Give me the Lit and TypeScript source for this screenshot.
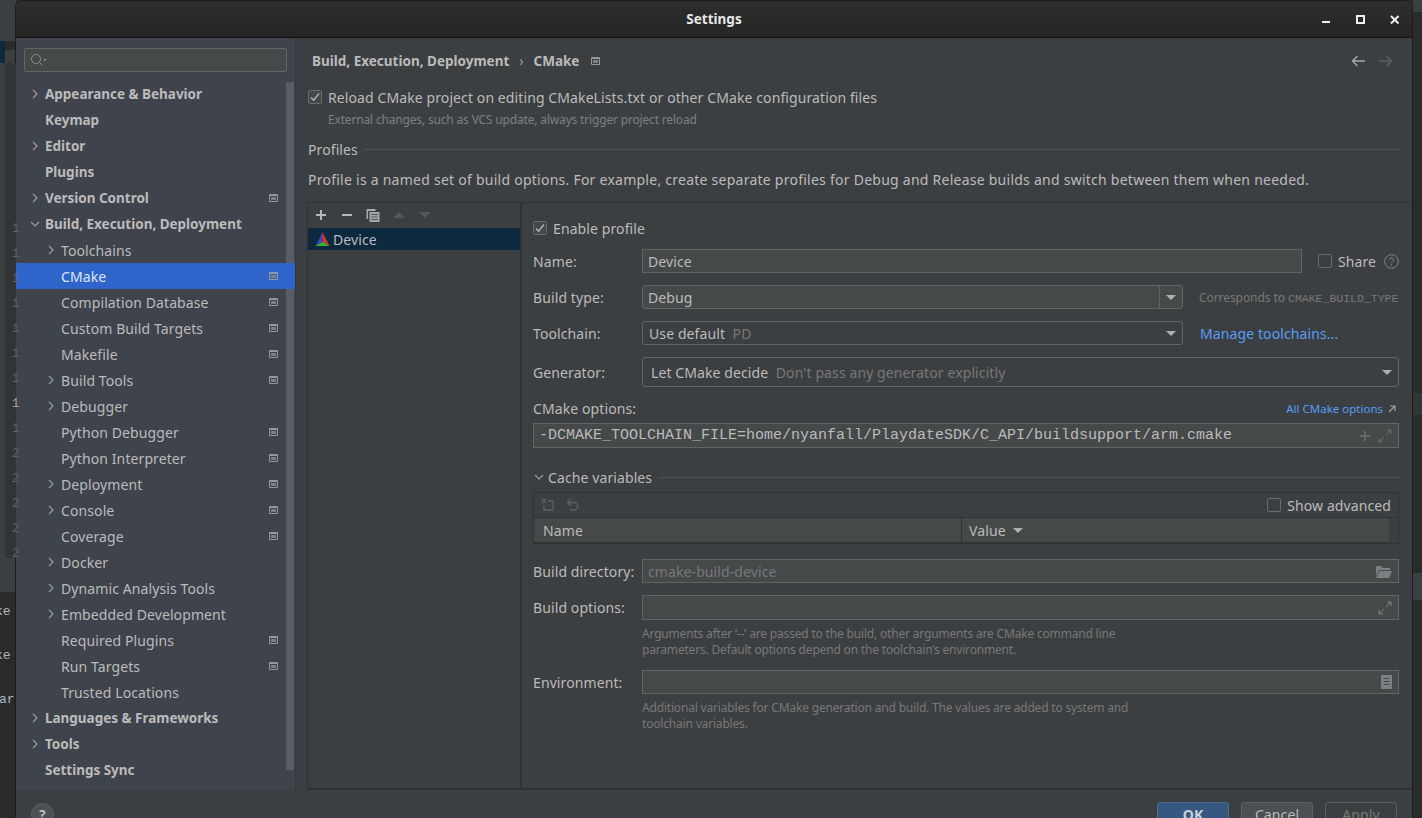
import { LitElement, css, html, svg } from 'lit';
import { customElement } from 'lit/decorators.js';

type TreeRow = { label: string; level: 0 | 1; arrow?: 'right' | 'down'; pin?: boolean; selected?: boolean };

const TREE: TreeRow[] = [
  { label: 'Appearance & Behavior', level: 0, arrow: 'right' },
  { label: 'Keymap', level: 0 },
  { label: 'Editor', level: 0, arrow: 'right' },
  { label: 'Plugins', level: 0 },
  { label: 'Version Control', level: 0, arrow: 'right', pin: true },
  { label: 'Build, Execution, Deployment', level: 0, arrow: 'down' },
  { label: 'Toolchains', level: 1, arrow: 'right' },
  { label: 'CMake', level: 1, pin: true, selected: true },
  { label: 'Compilation Database', level: 1, pin: true },
  { label: 'Custom Build Targets', level: 1, pin: true },
  { label: 'Makefile', level: 1, pin: true },
  { label: 'Build Tools', level: 1, arrow: 'right', pin: true },
  { label: 'Debugger', level: 1, arrow: 'right' },
  { label: 'Python Debugger', level: 1, pin: true },
  { label: 'Python Interpreter', level: 1, pin: true },
  { label: 'Deployment', level: 1, arrow: 'right', pin: true },
  { label: 'Console', level: 1, arrow: 'right', pin: true },
  { label: 'Coverage', level: 1, pin: true },
  { label: 'Docker', level: 1, arrow: 'right' },
  { label: 'Dynamic Analysis Tools', level: 1, arrow: 'right' },
  { label: 'Embedded Development', level: 1, arrow: 'right' },
  { label: 'Required Plugins', level: 1, pin: true },
  { label: 'Run Targets', level: 1, pin: true },
  { label: 'Trusted Locations', level: 1 },
  { label: 'Languages & Frameworks', level: 0, arrow: 'right' },
  { label: 'Tools', level: 0, arrow: 'right' },
  { label: 'Settings Sync', level: 0 },
  { label: 'Advanced Settings', level: 0 },
];

// line numbers of the editor peeking out left of the dialog
const GUTTER = Array.from(new Array(14)).map(($, i) => ({ top: 222 + i * 25, nb: i < 9 ? '1' : '2', bright: i === 7 }));

const chevron = (dir: 'right' | 'down') =>
  svg`<svg class="chev" width="10" height="10" viewBox="0 0 10 10"><path d="${
    dir === 'right' ? 'M3 1l4 4-4 4' : 'M1 3l4 4 4-4'
  }" fill="none" stroke="#9a9da0" stroke-width="1.2"/></svg>`;

const pin = () =>
  svg`<svg class="pin" width="10" height="9" viewBox="0 0 10 9"><path d="M.5.5h8v7h-8z" fill="none" stroke="#94989d"/><path d="M1 1h7v1H1z" fill="#94989d"/><path d="M2 3h5v3H2z" fill="#7d8186"/></svg>`;

const check = () =>
  svg`<svg width="10" height="10" viewBox="0 0 10 10"><path d="M1 5.5l2.6 2.8L9 1.5" fill="none" stroke="#a9abad" stroke-width="1.6"/></svg>`;

const caret = () => html`<span class="caret"></span>`;

@customElement('app-root')
export class AppRoot extends LitElement {
  static styles = css`
    :host {
      display: block;
      width: 1422px;
      height: 818px;
      overflow: hidden;
      position: relative;
      background: #2b2b2b;
      font-family: 'Noto Sans', 'Open Sans', sans-serif;
      font-size: 14px;
      letter-spacing: 0.1px;
      color: #bbbbbb;
    }
    .behind {
      position: absolute;
      inset: 0;
      font-family: 'Liberation Mono', monospace;
      font-size: 13px;
      letter-spacing: 0;
      color: #a9b7c6;
    }
    .behind > div { position: absolute; }
    .behind .top { left: 0; top: 0; width: 16px; height: 41px; background: #3c3f41; }
    .behind .sel { left: 0; top: 41px; width: 5px; height: 22px; background: #0d293e; }
    .behind .tree { left: 0; top: 41px; width: 16px; height: 517px; background: #3c3f41; z-index: 0; }
    .behind .sel { z-index: 1; }
    .behind .side { left: 5px; top: 63px; width: 11px; height: 495px; background: #313335; z-index: 1; }
    .behind .bar { left: 0; top: 558px; width: 16px; height: 34px; background: #3c3f41; }
    .behind .frag { position: absolute; white-space: pre; }
    .behind .nb { position: absolute; left: 12px; z-index: 2; font-size: 12px; color: #606366; }
    .behind .nb.bright { color: #a4a3a3; }
    .behind .right { right: 0; top: 0; width: 9px; height: 818px; background: #2b2b2b; }
    .behind .rtop { right: 0; top: 0; width: 9px; height: 12px; background: #3c3f41; z-index: 1; }
    .behind .r1 { right: 0; top: 393px; width: 9px; height: 22px; background: #333537; z-index: 1; }
    .behind .r2 { right: 0; top: 573px; width: 9px; height: 27px; background: #3c3f41; z-index: 1; }
    .window {
      position: absolute;
      left: 15px;
      top: 0;
      width: 1398px;
      height: 830px;
      border: 1px solid #1c1c1c;
      border-radius: 7px 7px 0 0;
      display: flex;
      flex-direction: column;
      background: #3c3f41;
      box-sizing: border-box;
      overflow: hidden;
    }
    .title {
      height: 37px;
      flex: none;
      box-sizing: border-box;
      border-bottom: 1px solid #111;
      background: linear-gradient(#2e2e2e, #252525);
      display: flex;
      align-items: center;
      justify-content: center;
      position: relative;
      font-weight: 700;
      font-size: 13.5px;
      letter-spacing: 0;
      color: #e6e6e6;
    }
    .winctl svg { display: block; position: absolute; }
    .body { flex: none; height: 752px; display: flex; }
    .sidebar {
      width: 279px;
      flex: none;
      background: #3f434b;
      position: relative;
      overflow: hidden;
      box-sizing: border-box;
      padding-top: 10px;
    }
    .search {
      margin-left: 8px;
      width: 263px;
      height: 24px;
      box-sizing: border-box;
      border: 1px solid #646464;
      border-radius: 2px;
      background: #45494a;
      display: flex;
      align-items: center;
      padding-left: 5px;
    }
    .tree { margin-top: 9px; position: relative; z-index: 1; }
    .row {
      height: 26px;
      display: flex;
      align-items: center;
      position: relative;
      white-space: nowrap;
    }
    .row.l0 { padding-left: 29px; font-weight: 700; font-size: 13.5px; letter-spacing: -0.02px; }
    .row.l1 { padding-left: 45px; }
    .row .chev { position: absolute; top: 8px; }
    .row.l0 .chev { left: 14px; }
    .row.l1 .chev { left: 30px; }
    .row .pin { position: absolute; left: 253px; top: 9px; }
    .row.sel { background: #2f65ca; color: #dfe6f2; }
    .scroll {
      position: absolute;
      left: 270px;
      top: 44px;
      width: 8px;
      height: 688px;
      background: #595c64;
    }
    .main {
      flex: 1;
      min-width: 0;
      box-sizing: border-box;
      padding: 0 0 0 12px;
      display: flex;
      flex-direction: column;
      border-left: 1px solid #353739;
    }
    .crumbs {
      height: 46px;
      flex: none;
      display: flex;
      align-items: center;
      padding: 0 0 0 4px;
      font-weight: 700;
      font-size: 13.5px;
      letter-spacing: 0;
      position: relative;
    }
    .crumbs .sep { margin: 0 10px; font-weight: 400; color: #9a9da0; }
    .crumbs .pin { margin-left: 12px; }
    .nav { margin-left: auto; margin-right: 19px; display: flex; gap: 12px; }
    .cb {
      width: 14px;
      height: 14px;
      box-sizing: border-box;
      border: 1px solid #6b6b6b;
      border-radius: 2px;
      background: #43494a;
      display: inline-flex;
      align-items: center;
      justify-content: center;
      flex: none;
    }
    .cb.off { background: none; }
    .line { display: flex; align-items: center; gap: 6px; }
    .reload { height: 26px; }
    .sub { font-size: 12px; letter-spacing: -0.17px; color: #7d8083; padding-left: 20px; height: 18px; line-height: 18px; margin-top: 1px; }
    .group { display: flex; align-items: center; margin-top: 9px; height: 22px; }
    .group::after { content: ''; flex: 1; height: 1px; background: #515151; margin-left: 6px; }
    .profiles { margin-right: 11px; }
    .desc { height: 22px; margin-top: 8px; display: flex; align-items: center; letter-spacing: 0.25px; white-space: nowrap; }
    .panel {
      flex: 1;
      min-height: 0;
      margin-top: 12px;
      margin-left: -1px;
      border-top: 1px solid #323232;
      border-left: 1px solid #323232;
      border-bottom: 2px solid #323232;
      display: flex;
    }
    .left { width: 212px; flex: none; border-right: 2px solid #323232; }
    .tools { height: 24px; display: flex; align-items: center; gap: 12px; padding-left: 6px; }
    .tools svg { display: block; }
    .device { height: 22px; background: #0d293e; display: flex; align-items: center; gap: 3px; padding-left: 7px; margin-top: 1px; }
    .form { flex: 1; min-width: 0; padding: 0 13px 0 11px; box-sizing: border-box; }
    .enable { height: 24px; margin-top: 13px; gap: 6px; }
    .frow { display: flex; align-items: center; margin-top: 12px; }
    .frow.first { margin-top: 9px; }
    .frow.dir { margin-top: 15px; }
    .frow > label { width: 109px; flex: none; white-space: nowrap; }
    .field {
      box-sizing: border-box;
      height: 24px;
      border: 1px solid #646464;
      background: #45494a;
      display: flex;
      align-items: center;
      padding-left: 5px;
      white-space: nowrap;
      position: relative;
    }
    .field.name { width: 660px; }
    .field.h25 { height: 25px; }
    .grow { flex: 1; min-width: 0; }
    .combo { background: #3c3f41; border-radius: 3px; padding-left: 6px; width: 541px; }
    .combo.filled { background: #45494a; padding-left: 5px; }
    .combo.generator { width: auto; height: 30px; padding-left: 8px; }
    .share { margin-left: 6px; }
    .dim { color: #787878; }
    .hint { font-size: 12px; letter-spacing: -0.07px; color: #787878; margin-left: 16px; white-space: nowrap; }
    .hint .m { font-family: 'Liberation Mono', monospace; font-size: 11.5px; letter-spacing: 0; }
    .link { color: #589df6; }
    .manage { margin-left: 17px; }
    .caret {
      width: 0;
      height: 0;
      border-left: 5px solid transparent;
      border-right: 5px solid transparent;
      border-top: 5px solid #aeb1b3;
      position: absolute;
      right: 6px;
      top: 50%;
      margin-top: -2px;
    }
    .seg {
      position: absolute;
      right: 22px;
      top: 0;
      bottom: 0;
      width: 1px;
      background: #646464;
    }
    .optlabel { display: flex; align-items: center; justify-content: space-between; margin-top: 9px; height: 24px; }
    .optlabel .link { font-size: 11.5px; letter-spacing: 0; }
    .ext { margin: 0 3px 0 2px; }
    .mono { font-family: 'Liberation Mono', monospace; font-size: 15px; letter-spacing: 0; color: #bbbbbb; height: 25px; margin-top: 3px; }
    .icons { position: absolute; right: 6px; top: 0; bottom: 0; display: flex; align-items: center; gap: 7px; }
    .cache { display: flex; align-items: center; height: 22px; margin-top: 18px; }
    .cache::after { content: ''; flex: 1; height: 1px; background: #515151; margin-left: 6px; }
    .cache svg { margin: 0 4px 0 1px; }
    .table { border: 1px solid #323232; margin-top: 4px; height: 52px; box-sizing: border-box; }
    .ttools { height: 24px; display: flex; align-items: center; padding-left: 7px; gap: 11px; border-bottom: 1px solid #323232; }
    .advanced { margin-left: auto; margin-right: 7px; gap: 6px; }
    .thead { height: 25px; display: flex; align-items: center; background: #45494a; margin-right: 9px; box-sizing: border-box; border-bottom: 1px solid #323232; }
    .thead .c1 { width: 428px; box-sizing: border-box; padding-left: 9px; border-right: 1px solid #323232; height: 100%; display: flex; align-items: center; }
    .thead .c2 { padding-left: 7px; display: flex; align-items: center; gap: 7px; }
    .sort { width: 0; height: 0; border-left: 5px solid transparent; border-right: 5px solid transparent; border-top: 5px solid #aeb1b3; }
    .help { font-size: 12px; letter-spacing: -0.18px; line-height: 16px; color: #787878; margin: 6px 0 0 109px; }
    .foot {
      flex: none;
      height: 40px;
      display: flex;
      align-items: flex-start;
      padding-top: 12px;
      box-sizing: border-box;
      position: relative;
    }
    .qm {
      position: absolute;
      left: 15px;
      top: 13px;
      width: 23px;
      height: 23px;
      box-sizing: border-box;
      border-radius: 50%;
      border: 1px solid #5e6060;
      background: #4c5052;
      text-align: center;
      font-weight: 700;
      line-height: 21px;
    }
    .btns { margin-left: auto; margin-right: 15px; display: flex; gap: 12px; }
    .btn {
      width: 72px;
      height: 26px;
      box-sizing: border-box;
      border: 1px solid #5e6060;
      border-radius: 3px;
      background: #4c5052;
      text-align: center;
      line-height: 24px;
    }
    .btn.ok { background: #365880; border-color: #4c708c; font-weight: 700; color: #c9d2db; }
    .btn.off { background: transparent; color: #777777; }
  `;

  render() {
    return html`
      <div class="behind">
        <div class="top"></div>
        <div class="tree"></div>
        <div class="sel"></div>
        <div class="side"></div>
        <div class="bar"></div>
        ${GUTTER.map((g) => html`<span class="nb ${g.bright ? 'bright' : ''}" style="top:${g.top}px">${g.nb}</span>`)}
        <span class="frag" style="top:604px;left:-5px">ke</span>
        <span class="frag" style="top:648px;left:-5px">ke</span>
        <span class="frag" style="top:692px;left:-1px">arg</span>
        <div class="right"></div>
        <div class="rtop"></div>
        <div class="r1"></div>
        <div class="r2"></div>
      </div>
      <div class="window">
        <div class="title">
          Settings
          <div class="winctl">
            <svg style="right:81px;top:12px" width="10" height="10" viewBox="0 0 10 10"><path d="M1 8h8v2H1z" fill="#eee"/></svg>
            <svg style="right:46px;top:14px" width="10" height="10" viewBox="0 0 10 10"><path d="M1 1h7v7H1z" fill="none" stroke="#eee" stroke-width="2"/></svg>
            <svg style="right:12px;top:14px" width="10" height="10" viewBox="0 0 10 10"><path d="M1 1l7.5 7.5M8.5 1L1 8.5" fill="none" stroke="#eee" stroke-width="2"/></svg>
          </div>
        </div>
        <div class="body">
          <div class="sidebar">
            <div class="search">
              <svg width="18" height="14" viewBox="0 0 18 14"><circle cx="6" cy="6" r="4.5" fill="none" stroke="#8a8d90"/><path d="M9.5 9.5l3 3" stroke="#8a8d90"/><path d="M13 6h4l-2 2z" fill="#8a8d90"/></svg>
            </div>
            <div class="tree">
              ${TREE.map(
                (r) => html`<div class="row l${r.level} ${r.selected ? 'sel' : ''}">
                  ${r.arrow ? chevron(r.arrow) : ''}${r.label}${r.pin ? pin() : ''}
                </div>`,
              )}
            </div>
            <div class="scroll"></div>
          </div>
          <div class="main">
            <div class="crumbs">
              Build, Execution, Deployment<span class="sep">›</span>CMake${pin()}
              <div class="nav">
                <svg width="15" height="12" viewBox="0 0 15 12"><path d="M14 6H2M6.5 1L1.5 6l5 5" fill="none" stroke="#a6a8aa" stroke-width="1.5"/></svg>
                <svg width="15" height="12" viewBox="0 0 15 12"><path d="M1 6h12M8.5 1l5 5-5 5" fill="none" stroke="#5c5f61" stroke-width="1.5"/></svg>
              </div>
            </div>
            <div class="line reload"><span class="cb">${check()}</span>Reload CMake project on editing CMakeLists.txt or other CMake configuration files</div>
            <div class="sub">External changes, such as VCS update, always trigger project reload</div>
            <div class="group profiles">Profiles</div>
            <div class="desc">Profile is a named set of build options. For example, create separate profiles for Debug and Release builds and switch between them when needed.</div>
            <div class="panel">
              <div class="left">
                <div class="tools">
                  <svg width="14" height="14" viewBox="0 0 14 14"><path d="M7 2v10M2 7h10" stroke="#b4b6b8" stroke-width="2"/></svg>
                  <svg width="14" height="14" viewBox="0 0 14 14"><path d="M2 7h10" stroke="#b4b6b8" stroke-width="2"/></svg>
                  <svg width="14" height="14" viewBox="0 0 14 14"><path d="M.5 1h9v2H2v8H.5z" fill="#a6a8aa"/><path d="M3.5 4h10v10h-10z" fill="#a6a8aa"/><path d="M5 6.5h7M5 9h7M5 11.5h7" stroke="#3c3f41" stroke-width=".8"/></svg>
                  <svg width="14" height="14" viewBox="0 0 14 14"><path d="M1 10l6-6 6 6z" fill="#55585a"/></svg>
                  <svg width="14" height="14" viewBox="0 0 14 14"><path d="M1 4l6 6 6-6z" fill="#55585a"/></svg>
                </div>
                <div class="device">
                  <svg width="15" height="15" viewBox="0 0 15 15"><path d="M7.5 0L.5 14l7-4z" fill="#3b46c0"/><path d="M7.5 0l7 14-7-4z" fill="#d7352c"/><path d="M.5 14l7-4 7 4z" fill="#35b52f"/></svg>
                  Device
                </div>
              </div>
              <div class="form">
                <div class="line enable"><span class="cb">${check()}</span>Enable profile</div>
                <div class="frow first">
                  <label>Name:</label>
                  <div class="field name">Device</div>
                  <span class="cb off" style="margin-left:16px"></span>
                  <span class="share">Share</span>
                  <svg style="margin-left:8px" width="15" height="15" viewBox="0 0 15 15"><circle cx="7.5" cy="7.5" r="6.8" fill="none" stroke="#808386"/><path d="M5.500 6a2 2 0 1 1 3 1.700c-.7.4-1 .8-1 1.500M7.500 10.500v1.300" fill="none" stroke="#808386"/></svg>
                </div>
                <div class="frow">
                  <label>Build type:</label>
                  <div class="field combo filled">Debug<span class="seg"></span>${caret()}</div>
                  <span class="hint">Corresponds to <span class="m">CMAKE_BUILD_TYPE</span></span>
                </div>
                <div class="frow">
                  <label>Toolchain:</label>
                  <div class="field combo">Use default&nbsp;&nbsp;<span class="dim">PD</span>${caret()}</div>
                  <span class="link manage">Manage toolchains...</span>
                </div>
                <div class="frow">
                  <label>Generator:</label>
                  <div class="field combo generator grow">Let CMake decide&nbsp;&nbsp;<span class="dim">Don't pass any generator explicitly</span>${caret()}</div>
                </div>
                <div class="optlabel">
                  <span>CMake options:</span>
                  <span class="link">All CMake options <svg class="ext" width="8" height="8" viewBox="0 0 8 8"><path d="M1 7l5.5-5.5M2 1h5v5" fill="none" stroke="#a0a2a4" stroke-width="1.2"/></svg></span>
                </div>
                <div class="field mono">-DCMAKE_TOOLCHAIN_FILE=home/nyanfall/PlaydateSDK/C_API/buildsupport/arm.cmake
                  <div class="icons">
                    <svg width="12" height="12" viewBox="0 0 12 12"><path d="M6 1v10M1 6h10" stroke="#6e7173" stroke-width="1.5"/></svg>
                    <svg width="14" height="14" viewBox="0 0 14 14"><path d="M8 6l5-5M9 1h4v4M6 8l-5 5M1 9v4h4" fill="none" stroke="#6e7173"/></svg>
                  </div>
                </div>
                <div class="cache">
                  <svg width="10" height="10" viewBox="0 0 10 10"><path d="M1 3l4 4 4-4" fill="none" stroke="#9a9da0" stroke-width="1.2"/></svg>
                  Cache variables
                </div>
                <div class="table">
                  <div class="ttools">
                    <svg width="14" height="14" viewBox="0 0 14 14"><path d="M1 1l4 4M5 1L1 5M7 3h5v9H3V7" fill="none" stroke="#5f6264" stroke-width="1.3"/></svg>
                    <svg width="14" height="14" viewBox="0 0 14 14"><path d="M5 1L1.5 4.500 5 8M2 4.500h6a3.700 3.700 0 0 1 0 7.500H4" fill="none" stroke="#5f6264" stroke-width="1.3"/></svg>
                    <div class="line advanced"><span class="cb off"></span>Show advanced</div>
                  </div>
                  <div class="thead">
                    <div class="c1">Name</div>
                    <div class="c2">Value <span class="sort"></span></div>
                  </div>
                </div>
                <div class="frow dir">
                  <label>Build directory:</label>
                  <div class="field grow"><span class="dim">cmake-build-device</span>
                    <div class="icons"><svg width="16" height="13" viewBox="0 0 16 13"><path d="M0 2V1h5l2 2h7v2H3L0 11z" fill="#7d8082"/><path d="M3.500 6H16l-3 7H0z" fill="#7d8082"/></svg></div>
                  </div>
                </div>
                <div class="frow">
                  <label>Build options:</label>
                  <div class="field h25 grow">
                    <div class="icons"><svg width="14" height="14" viewBox="0 0 14 14"><path d="M8 6l5-5M9 1h4v4M6 8l-5 5M1 9v4h4" fill="none" stroke="#85888a"/></svg></div>
                  </div>
                </div>
                <div class="help">Arguments after ‘--’ are passed to the build, other arguments are CMake command line<br />parameters. Default options depend on the toolchain’s environment.</div>
                <div class="frow">
                  <label>Environment:</label>
                  <div class="field grow">
                    <div class="icons"><svg width="11" height="14" viewBox="0 0 11 14"><path d="M0 0h11v14H0zM2.500 3v1h6V3zM2.500 6v1h6V6zM2.500 9v1h6V9z" fill="#7d8082" fill-rule="evenodd"/></svg></div>
                  </div>
                </div>
                <div class="help">Additional variables for CMake generation and build. The values are added to system and<br />toolchain variables.</div>
              </div>
            </div>
          </div>
        </div>
        <div class="foot">
          <div class="qm">?</div>
          <div class="btns">
            <div class="btn ok">OK</div>
            <div class="btn">Cancel</div>
            <div class="btn off">Apply</div>
          </div>
        </div>
      </div>
    `;
  }
}
